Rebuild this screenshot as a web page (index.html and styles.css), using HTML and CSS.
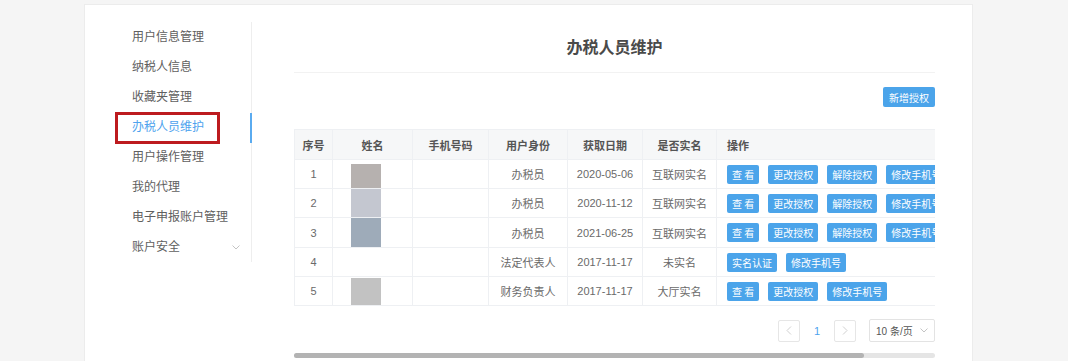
FILE: index.html
```html
<!DOCTYPE html>
<html lang="zh-CN">
<head>
  <meta charset="UTF-8">
  <title>办税人员维护</title>
  <link rel="stylesheet" href="styles.css">
</head>
<body>

  <div class="card">

    <aside class="sidebar">
      <ul class="menu">
        <li>用户信息管理</li>
        <li>纳税人信息</li>
        <li>收藏夹管理</li>
        <li class="active">办税人员维护</li>
        <li>用户操作管理</li>
        <li>我的代理</li>
        <li>电子申报账户管理</li>
        <li class="has-sub">账户安全
          <svg class="caret" width="8" height="5" viewBox="0 0 8 5"><path d="M0.5 0.5 L4 4 L7.5 0.5" fill="none" stroke="#c4c4c4" stroke-width="1"/></svg>
        </li>
      </ul>
    </aside>

    <main class="content">
      <h2 class="title">办税人员维护</h2>

      <div class="toolbar">
        <button class="btn">新增授权</button>
      </div>

      <div class="table-wrap">
        <table class="grid">
          <colgroup>
            <col style="width: 38px">
            <col style="width: 80px">
            <col style="width: 76px">
            <col style="width: 79px">
            <col style="width: 75px">
            <col style="width: 74px">
            <col style="width: 308px">
          </colgroup>
          <thead>
            <tr>
              <th>序号</th>
              <th>姓名</th>
              <th>手机号码</th>
              <th>用户身份</th>
              <th>获取日期</th>
              <th>是否实名</th>
              <th class="op">操作</th>
            </tr>
          </thead>
          <tbody>
            <tr>
              <td>1</td>
              <td class="name"><span class="blur blur-1"></span></td>
              <td></td>
              <td>办税员</td>
              <td>2020-05-06</td>
              <td>互联网实名</td>
              <td class="op"><div class="actions">
                <button class="btn">查 看</button>
                <button class="btn">更改授权</button>
                <button class="btn">解除授权</button>
                <button class="btn">修改手机号</button>
              </div></td>
            </tr>
            <tr>
              <td>2</td>
              <td class="name"><span class="blur blur-2"></span></td>
              <td></td>
              <td>办税员</td>
              <td>2020-11-12</td>
              <td>互联网实名</td>
              <td class="op"><div class="actions">
                <button class="btn">查 看</button>
                <button class="btn">更改授权</button>
                <button class="btn">解除授权</button>
                <button class="btn">修改手机号</button>
              </div></td>
            </tr>
            <tr>
              <td>3</td>
              <td class="name"><span class="blur blur-3"></span></td>
              <td></td>
              <td>办税员</td>
              <td>2021-06-25</td>
              <td>互联网实名</td>
              <td class="op"><div class="actions">
                <button class="btn">查 看</button>
                <button class="btn">更改授权</button>
                <button class="btn">解除授权</button>
                <button class="btn">修改手机号</button>
              </div></td>
            </tr>
            <tr>
              <td>4</td>
              <td class="name"></td>
              <td></td>
              <td>法定代表人</td>
              <td>2017-11-17</td>
              <td>未实名</td>
              <td class="op"><div class="actions">
                <button class="btn">实名认证</button>
                <button class="btn">修改手机号</button>
              </div></td>
            </tr>
            <tr>
              <td>5</td>
              <td class="name"><span class="blur blur-5"></span></td>
              <td></td>
              <td>财务负责人</td>
              <td>2017-11-17</td>
              <td>大厅实名</td>
              <td class="op"><div class="actions">
                <button class="btn">查 看</button>
                <button class="btn">更改授权</button>
                <button class="btn">修改手机号</button>
              </div></td>
            </tr>
          </tbody>
        </table>
      </div>

      <div class="pager">
        <span class="pg-btn">
          <svg width="6" height="9" viewBox="0 0 6 9"><path d="M5 0.5 L1 4.5 L5 8.5" fill="none" stroke="#d0d0d0" stroke-width="1"/></svg>
        </span>
        <span class="pg-num">1</span>
        <span class="pg-btn">
          <svg width="6" height="9" viewBox="0 0 6 9"><path d="M1 0.5 L5 4.5 L1 8.5" fill="none" stroke="#d0d0d0" stroke-width="1"/></svg>
        </span>
        <span class="pg-size">10 条/页
          <svg width="8" height="5" viewBox="0 0 8 5"><path d="M0.5 0.5 L4 4 L7.5 0.5" fill="none" stroke="#c4c4c4" stroke-width="1"/></svg>
        </span>
      </div>

      <div class="hscroll"><div class="thumb"></div></div>
    </main>

  </div>

</body>
</html>
```

FILE: styles.css
```css
body {
  margin: 0;
  background-color: #f5f5f5;
  font-family: "Liberation Sans", "Noto Sans CJK SC", sans-serif;
  color: #666;
  overflow: hidden;
}

.card {
  display: flex;
  margin: 5px 0 0 85px;
  width: 887px;
  height: 400px;
  background-color: #fff;
  box-shadow: 0 0 0 1px #ececec;
}

/* menu lateral */
.sidebar {
  width: 167px;
  flex-shrink: 0;
}
.menu {
  list-style: none;
  margin: 17px 0 0;
  padding: 0;
  border-right: 1px solid #eeeeee;
}
.menu li {
  position: relative;
  height: 30px;
  line-height: 30px;
  padding-left: 47px;
  font-size: 12px;
  color: #606060;
}
.menu li.active {
  color: #4ea3ee;
}
.menu li.active::after {
  content: "";
  position: absolute;
  right: -1px;
  top: 1px;
  width: 2px;
  height: 30px;
  background-color: #5aabf0;
}
.menu li.active::before {
  content: "";
  position: absolute;
  left: 30px;
  top: 0;
  width: 99px;
  height: 26px;
  border: 3px solid #bd1b1f;
}
.caret {
  position: absolute;
  left: 147px;
  top: 13px;
}

/* contenido */
.content {
  flex: 1;
  padding: 0 37px 0 42px;
  min-width: 0;
}
.title {
  margin: 31px 0 0;
  padding-bottom: 12px;
  line-height: 24px;
  font-size: 16px;
  font-weight: bold;
  text-align: center;
  color: #4a4a4a;
  border-bottom: 1px solid #f2f2f2;
}
.toolbar {
  margin-top: 14px;
  text-align: right;
  height: 20px;
}

.btn {
  height: 19px;
  padding: 0 5px;
  border: none;
  border-radius: 2px;
  background-color: #4ba4ea;
  color: #fff;
  font-family: "Noto Sans CJK SC", sans-serif;
  font-size: 10px;
  line-height: 19px;
  white-space: nowrap;
}
.toolbar .btn {
  height: 20px;
  padding: 0 6px;
}

.table-wrap {
  margin-top: 22px;
  overflow: hidden;
}
.grid {
  width: 730px;
  table-layout: fixed;
  border-collapse: collapse;
  font-size: 11px;
}
.grid th,
.grid td {
  border: 1px solid #eef0f3;
  text-align: center;
  padding: 0;
  white-space: nowrap;
  overflow: hidden;
}
.grid th {
  height: 29px;
  background-color: #f6f7f8;
  color: #555;
  font-weight: bold;
}
.grid td {
  height: 28px;
  color: #6a6a6a;
}
.grid tbody tr {
  height: 29px;
}
.grid th.op,
.grid td.op {
  text-align: left;
  padding-left: 10px;
}
.actions {
  display: flex;
  gap: 9px;
}

.grid td.name {
  position: relative;
  vertical-align: top;
}
.blur {
  display: block;
  width: 30px;
  height: 28px;
  margin-left: 18px;
}
.blur-1 { background-color: #b6b1af; height: 24px; margin-top: 4px; }
.blur-2 { background-color: #c4c7d0; }
.blur-3 { background-color: #9eabb9; height: 29px; }
.blur-5 { background-color: #c2c2c2; height: 27px; margin-top: 1px; }

/* paginación */
.pager {
  display: flex;
  justify-content: flex-end;
  align-items: center;
  margin-top: 13px;
  height: 23px;
  font-size: 11px;
}
.pg-btn {
  display: flex;
  align-items: center;
  justify-content: center;
  width: 20px;
  height: 20px;
  border: 1px solid #e6e6e6;
  border-radius: 2px;
}
.pg-num {
  width: 34px;
  text-align: center;
  color: #4ea3ee;
}
.pg-size {
  display: flex;
  align-items: center;
  justify-content: space-between;
  margin-left: 13px;
  width: 52px;
  height: 21px;
  padding: 0 6px;
  border: 1px solid #e3e3e3;
  border-radius: 2px;
  color: #555;
  font-size: 10px;
}

.hscroll {
  margin-top: 11px;
  height: 5px;
  border-radius: 3px;
  background-color: #e5e5e5;
}
.thumb {
  width: 570px;
  height: 5px;
  border-radius: 3px;
  background-color: #b3b3b3;
}
```
